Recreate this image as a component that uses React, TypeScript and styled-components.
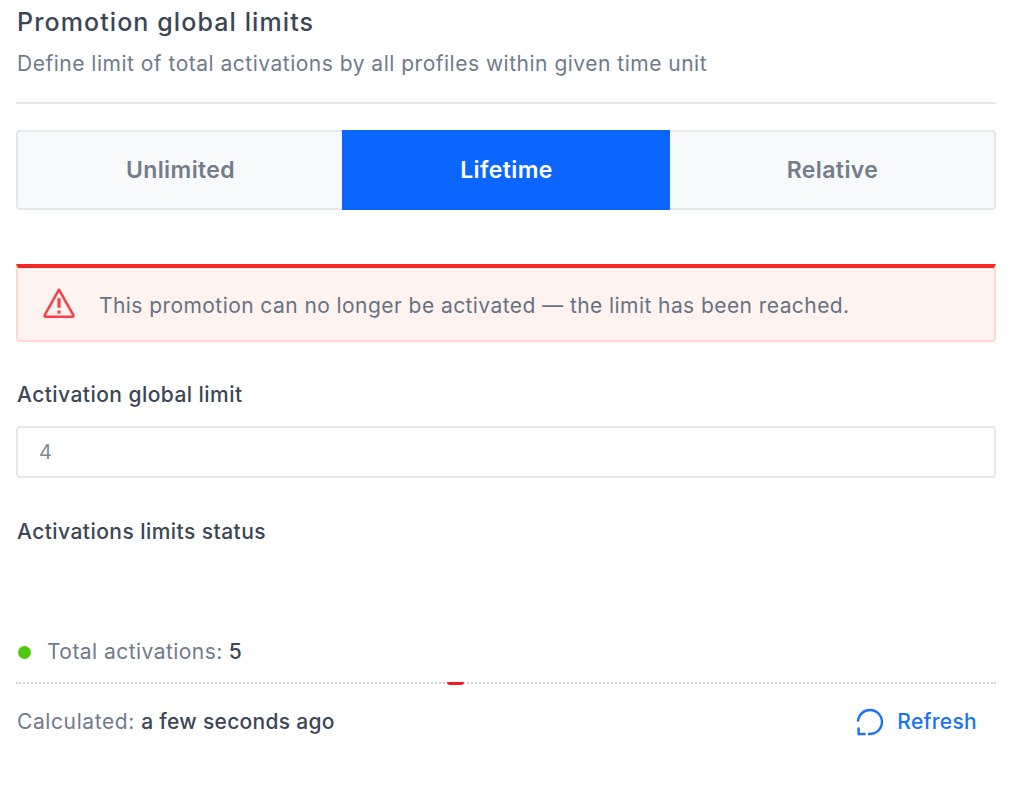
import styled, { createGlobalStyle } from "styled-components";

const GlobalStyle = createGlobalStyle`
  html, body {
    margin: 0;
    background: #fff;
    font-family: "Inter", "Roboto", sans-serif;
  }
`;

const options = ["Unlimited", "Lifetime", "Relative"];

export default function App() {
  return (
    <Page>
      <GlobalStyle />
      <Title>Promotion global limits</Title>
      <Subtitle>Define limit of total activations by all profiles within given time unit</Subtitle>
      <Divider />
      <Segments>
        {options.map((option) => (
          <Segment key={option} $active={option === "Lifetime"}>
            {option}
          </Segment>
        ))}
      </Segments>
      <Alert>
        <AlertIcon viewBox="0 0 32 32" fill="none">
          <path
            d="M16 3.5 2.5 27.5a1 1 0 0 0 .9 1.5h25.2a1 1 0 0 0 .9-1.5L16 3.5Z"
            stroke="#f5424a"
            strokeWidth="2.4"
            strokeLinejoin="round"
          />
          <path d="M16 11.5v9" stroke="#f5424a" strokeWidth="3" />
          <path d="M16 23v3" stroke="#f5424a" strokeWidth="3" />
        </AlertIcon>
        <AlertText>This promotion can no longer be activated — the limit has been reached.</AlertText>
      </Alert>
      <FieldLabel>Activation global limit</FieldLabel>
      <Input>4</Input>
      <StatusLabel>Activations limits status</StatusLabel>
      <TotalRow>
        <Dot />
        <Muted>Total activations:</Muted> <Strong>5</Strong>
      </TotalRow>
      <DottedLine>
        <RedMark />
      </DottedLine>
      <Footer>
        <span>
          <CalculatedLabel>Calculated:</CalculatedLabel> <Strong>a few seconds ago</Strong>
        </span>
        <Refresh>
          <svg width="30" height="30" viewBox="0 0 30 30" fill="none">
            <path d="M3 14.5A12 12 0 1 1 13 26.8" stroke="#1a73f5" strokeWidth="2.4" />
            <path d="M3.6 20.5v6.5h7" stroke="#1a73f5" strokeWidth="2.4" />
          </svg>
          Refresh
        </Refresh>
      </Footer>
    </Page>
  );
}

const Page = styled.div`
  width: 980px;
  padding: 8px 20px 0 16px;
`;

const Title = styled.h2`
  margin: 0;
  padding-left: 1px;
  font-size: 25px;
  line-height: 28px;
  font-weight: 500;
  letter-spacing: 1.1px;
  color: #3b4656;
`;

const Subtitle = styled.div`
  margin-top: 14px;
  padding-left: 1px;
  font-size: 21px;
  line-height: 28px;
  letter-spacing: 0.5px;
  color: #6f7b8b;
`;

const Divider = styled.div`
  margin-top: 24px;
  height: 2px;
  background: #e4e7ec;
`;

const Segments = styled.div`
  display: grid;
  grid-template-columns: 326px 328px 326px;
  height: 80px;
  margin-top: 26px;
`;

const Segment = styled.div<{ $active: boolean }>`
  display: flex;
  align-items: center;
  justify-content: center;
  box-sizing: border-box;
  padding-left: 1px;
  font-size: 23px;
  font-weight: 600;
  letter-spacing: 0.4px;
  color: ${(p) => (p.$active ? "#fff" : "#727c8a")};
  background: ${(p) => (p.$active ? "#0b66ff" : "#f8f9fb")};
  border: 2px solid ${(p) => (p.$active ? "#0b66ff" : "#e4e7ec")};
  &:first-child {
    border-right: 0;
    border-radius: 4px 0 0 4px;
  }
  &:last-child {
    border-left: 0;
    border-radius: 0 4px 4px 0;
  }
`;

const Alert = styled.div`
  display: flex;
  align-items: center;
  gap: 23px;
  box-sizing: border-box;
  height: 78px;
  margin-top: 54px;
  padding: 0 24px;
  background: #fff3f0;
  border: 2px solid #ffd8d0;
  border-top: 4px solid #f52828;
  border-radius: 0 0 4px 4px;
`;

const AlertIcon = styled.svg`
  width: 34px;
  height: 34px;
  flex: none;
  margin-top: -2px;
`;

const AlertText = styled.span`
  padding-top: 3px;
  font-size: 21px;
  letter-spacing: 0.43px;
  color: #667283;
`;

const FieldLabel = styled.div`
  margin-top: 39px;
  padding-left: 1px;
  font-size: 21px;
  line-height: 28px;
  font-weight: 500;
  letter-spacing: 0.45px;
  color: #3b4656;
`;

const Input = styled.div`
  display: flex;
  align-items: center;
  box-sizing: border-box;
  height: 52px;
  margin-top: 17px;
  padding-left: 21px;
  border: 2px solid #e4e7ec;
  border-radius: 4px;
  font-size: 20px;
  color: #7c8794;
`;

const StatusLabel = styled(FieldLabel)`
  margin-top: 40px;
`;

const TotalRow = styled.div`
  display: flex;
  align-items: center;
  gap: 6px;
  margin-top: 92px;
  padding-left: 2px;
  font-size: 21px;
  line-height: 28px;
  letter-spacing: 0.45px;
`;

const Dot = styled.span`
  width: 13px;
  height: 13px;
  margin-right: 10px;
  border-radius: 50%;
  background: #4fc90e;
`;

const Muted = styled.span`
  color: #6f7b8b;
`;

const CalculatedLabel = styled(Muted)`
  letter-spacing: 0.6px;
`;

const Strong = styled.span`
  color: #3b4656;
  font-weight: 500;
`;

const DottedLine = styled.div`
  position: relative;
  margin-top: 16px;
  border-top: 2px dotted #cfd3d8;
`;

const RedMark = styled.span`
  position: absolute;
  left: 431px;
  top: -2px;
  width: 17px;
  height: 3px;
  background: #f01b1b;
  border-radius: 0 0 10px 10px;
`;

const Footer = styled.div`
  display: flex;
  align-items: center;
  justify-content: space-between;
  margin-top: 23px;
  padding: 0 19px 0 1px;
  font-size: 21px;
  line-height: 30px;
  letter-spacing: 0.3px;
`;

const Refresh = styled.span`
  display: flex;
  align-items: center;
  gap: 12px;
  color: #1a73f5;
  font-weight: 500;
`;
